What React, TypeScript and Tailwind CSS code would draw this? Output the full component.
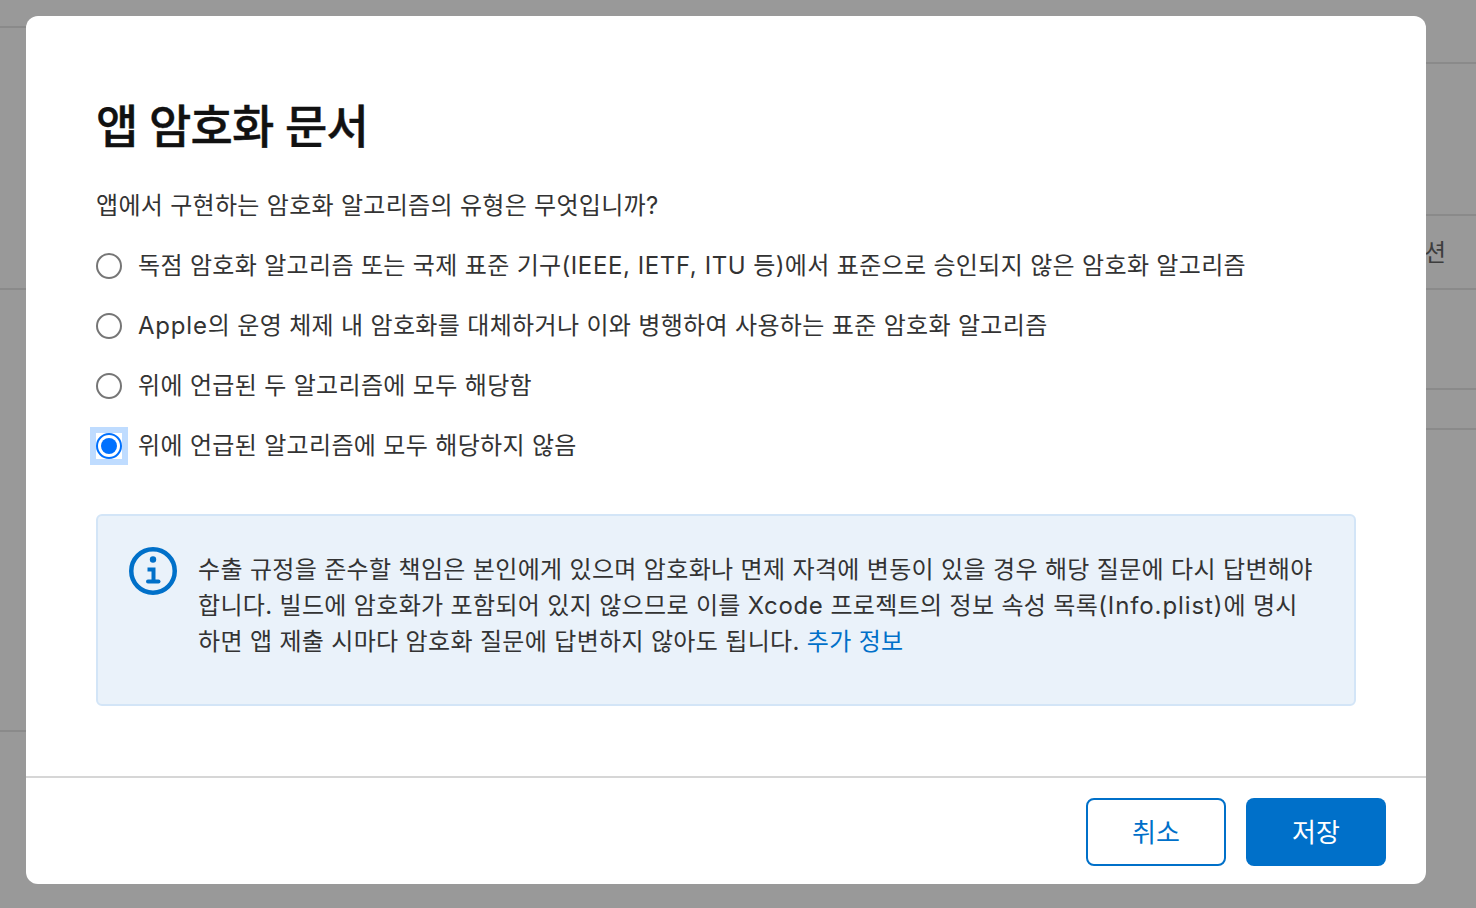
import React from "react";

const font = { fontFamily: '"Inter","Noto Sans CJK KR",sans-serif' };

function Radio({ children, checked }: { children: React.ReactNode; checked?: boolean }) {
  return (
    <div className="flex items-center h-[60px]">
      {checked ? (
        <span className="flex items-center justify-center w-[38px] h-[38px] -ml-[6px] mr-[10px] bg-[#bfdcff]">
          <span className="flex items-center justify-center w-[26px] h-[26px] bg-white">
            <span className="flex items-center justify-center w-[26px] h-[26px] rounded-full border-2 border-[#0071fe]">
              <span className="block w-[16px] h-[16px] rounded-full bg-[#0071fe]" />
            </span>
          </span>
        </span>
      ) : (
        <span className="block w-[26px] h-[26px] mr-[16px] rounded-full border-2 border-[#767676] bg-white" />
      )}
      <span className="text-[24px] leading-[30px] tracking-[0.33px] text-[#333333] whitespace-nowrap">{children}</span>
    </div>
  );
}

export default function App() {
  return (
    <div className="relative w-[1476px] h-[908px] overflow-hidden bg-[#999999] flex items-start justify-start pt-4 pl-[26px]" style={font}>
      <div className="absolute left-0 top-[26px] w-[26px] h-[2px] bg-[#8a8a8a]" />
      <div className="absolute left-0 top-[288px] w-[26px] h-[2px] bg-[#8a8a8a]" />
      <div className="absolute left-0 top-[730px] w-[26px] h-[2px] bg-[#8a8a8a]" />
      <div className="absolute right-0 top-[62px] w-[50px] h-[2px] bg-[#8a8a8a]" />
      <div className="absolute right-0 top-[214px] w-[50px] h-[2px] bg-[#8a8a8a]" />
      <div className="absolute right-0 top-[288px] w-[50px] h-[2px] bg-[#8a8a8a]" />
      <div className="absolute right-0 top-[388px] w-[50px] h-[2px] bg-[#8a8a8a]" />
      <div className="absolute right-0 top-[428px] w-[50px] h-[2px] bg-[#8a8a8a]" />
      <div className="absolute left-[1424px] top-[239px] text-[24px] leading-[28px] text-[#3d3d3d] whitespace-nowrap">션</div>

      <div className="relative w-[1400px] h-[868px] bg-white rounded-[12px] flex flex-col overflow-hidden">
        <div className="flex-1 px-[70px] pt-[81px]">
          <h1 className="text-[46px] leading-[58px] font-medium tracking-[-0.8px] [-webkit-text-stroke:0.4px_#111111] text-[#111111]">앱 암호화 문서</h1>
          <p className="mt-[36px] text-[24px] leading-[30px] tracking-[0.3px] text-[#333333]">앱에서 구현하는 암호화 알고리즘의 유형은 무엇입니까?</p>
          <div className="mt-[15px]">
            <Radio>
              독점 암호화 알고리즘 또는 국제 표준 기구<span className="tracking-[0.6px]">(IEEE, IETF, ITU</span> 등)에서 표준으로 승인되지 않은 암호화 알고리즘
            </Radio>
            <Radio>
              <span className="tracking-[0.8px]">Apple</span>의 운영 체제 내 암호화를 대체하거나 이와 병행하여 사용하는 표준 암호화 알고리즘
            </Radio>
            <Radio>위에 언급된 두 알고리즘에 모두 해당함</Radio>
            <Radio checked>위에 언급된 알고리즘에 모두 해당하지 않음</Radio>
          </div>
          <div className="mt-[38px] w-[1260px] h-[192px] rounded-[6px] border-2 border-[#d3e5f7] bg-[#eaf2fa] flex pl-[31px] pt-[31px]">
            <svg width="48" height="48" viewBox="0 0 48 48" className="shrink-0 mr-[21px]" fill="none">
              <circle cx="24" cy="24" r="21.75" stroke="#0070c9" strokeWidth="4.5" />
              <circle cx="24" cy="12.5" r="3.2" fill="#0070c9" />
              <path d="M18.5 22.5h6V34" stroke="#0070c9" strokeWidth="4" />
              <path d="M19 34.5h10.5" stroke="#0070c9" strokeWidth="4" strokeLinecap="round" />
            </svg>
            <p className="mt-[5px] w-[1125px] text-[24px] leading-[36px] tracking-[0.33px] text-[#333333]">
              수출 규정을 준수할 책임은 본인에게 있으며 암호화나 면제 자격에 변동이 있을 경우 해당 질문에 다시 답변해야
              <br />
              합니다. 빌드에 암호화가 포함되어 있지 않으므로 이를 <span className="tracking-[0.6px]">Xcode</span> 프로젝트의 정보 속성 목록<span className="tracking-[0.9px]">(Info.plist)</span>에 명시
              <br />
              하면 앱 제출 시마다 암호화 질문에 답변하지 않아도 됩니다. <span className="text-[#0070c9]">추가 정보</span>
            </p>
          </div>
        </div>
        <div className="h-[108px] border-t-2 border-[#d6d6d6] flex justify-end items-start gap-[20px] pr-[40px] pt-[20px]">
          <button className="w-[140px] h-[68px] rounded-[8px] border-2 border-[#0070c9] bg-white text-[#0070c9] text-[26px]">취소</button>
          <button className="w-[140px] h-[68px] rounded-[8px] bg-[#0070c9] text-white text-[26px]">저장</button>
        </div>
      </div>
    </div>
  );
}
